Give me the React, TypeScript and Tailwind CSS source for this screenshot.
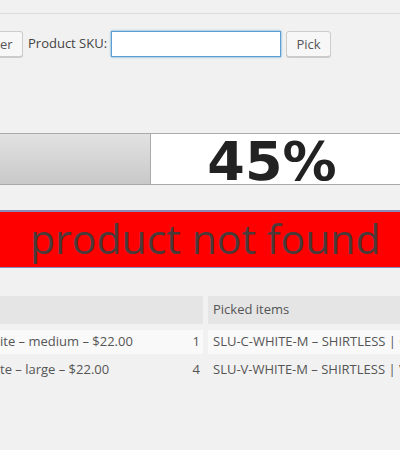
import React from 'react';

const rows = [
  { product: 'ite – medium – $22.00', qty: '1', picked: 'SLU-C-WHITE-M – SHIRTLESS | C', light: true },
  { product: 'te – large – $22.00', qty: '4', picked: 'SLU-V-WHITE-M – SHIRTLESS | V', light: false },
];

const btn =
  'h-[26px] bg-[#f7f7f7] border border-[#cccccc] shadow-[0_1px_0_#cccccc] text-[13px] text-[#555555] leading-[24px]';

const App: React.FC = () => {
  return (
    <div
      className="w-[400px] h-[450px] overflow-hidden bg-[#f1f1f1] text-[#444444]"
      style={{ fontFamily: '"Open Sans", "Liberation Sans", sans-serif' }}
    >
      {/* top rule */}
      <div className="h-[13px]" />
      <div className="h-px bg-[#dddddd]" />

      {/* pick form */}
      <div className="flex items-center mt-[17px] h-[26px]">
        <button className={`${btn} w-[23px] border-l-0 rounded-r-[3px] text-left pl-0`}>er</button>
        <span className="ml-[5px] text-[13px] text-[#444444]">Product SKU:</span>
        <input
          className="ml-[4px] w-[170px] h-[26px] bg-white border border-[#5b9dd9] shadow-[0_0_2px_rgba(30,140,190,0.8)] outline-none"
          type="text"
        />
        <button className={`${btn} ml-[5px] w-[45px] rounded-[3px]`}>Pick</button>
      </div>

      {/* progress */}
      <div className="mt-[76px] h-[52px] flex border-y border-[#aaaaaa] bg-white">
        <div className="w-[151px] bg-gradient-to-b from-[#e2e2e2] to-[#c9c9c9] border-r border-[#aaaaaa]" />
        <div className="flex-1 flex items-center justify-center pr-[7px] pt-[5px]">
          <span
            className="text-[54px] font-bold text-[#222222] leading-none"
            style={{ fontFamily: '"DejaVu Sans", Verdana, sans-serif' }}
          >
            45%
          </span>
        </div>
      </div>

      {/* error banner */}
      <div className="mt-[25px] h-[58px] bg-[#ff0000] border-t-2 border-b border-t-[#8a8ab8] border-b-[#8a8ab8] flex items-center pl-[30px]">
        <span className="text-[41px] text-[#4a3a3a] leading-none -mt-[2px]">product not found</span>
      </div>

      {/* table */}
      <div className="mt-[28px] flex flex-col text-[13px] text-[#555555]">
        <div className="flex gap-[5px] h-[28px]">
          <div className="w-[203px] bg-[#e5e5e5]" />
          <div className="flex-1 bg-[#e5e5e5] flex items-center pl-[5px]">Picked items</div>
        </div>
        {rows.map((r) => (
          <div
            key={r.qty}
            className={`flex gap-[5px] h-[24px] whitespace-nowrap ${r.light ? 'mt-[6px]' : 'mt-[4px]'}`}
          >
            <div className={`w-[203px] flex items-center justify-between pr-[3px] ${r.light ? 'bg-[#f9f9f9]' : ''}`}>
              <span>{r.product}</span>
              <span>{r.qty}</span>
            </div>
            <div className={`flex-1 flex items-center pl-[5px] overflow-hidden ${r.light ? 'bg-[#f9f9f9]' : ''}`}>
              {r.picked}
            </div>
          </div>
        ))}
      </div>
    </div>
  );
};

export default App;
